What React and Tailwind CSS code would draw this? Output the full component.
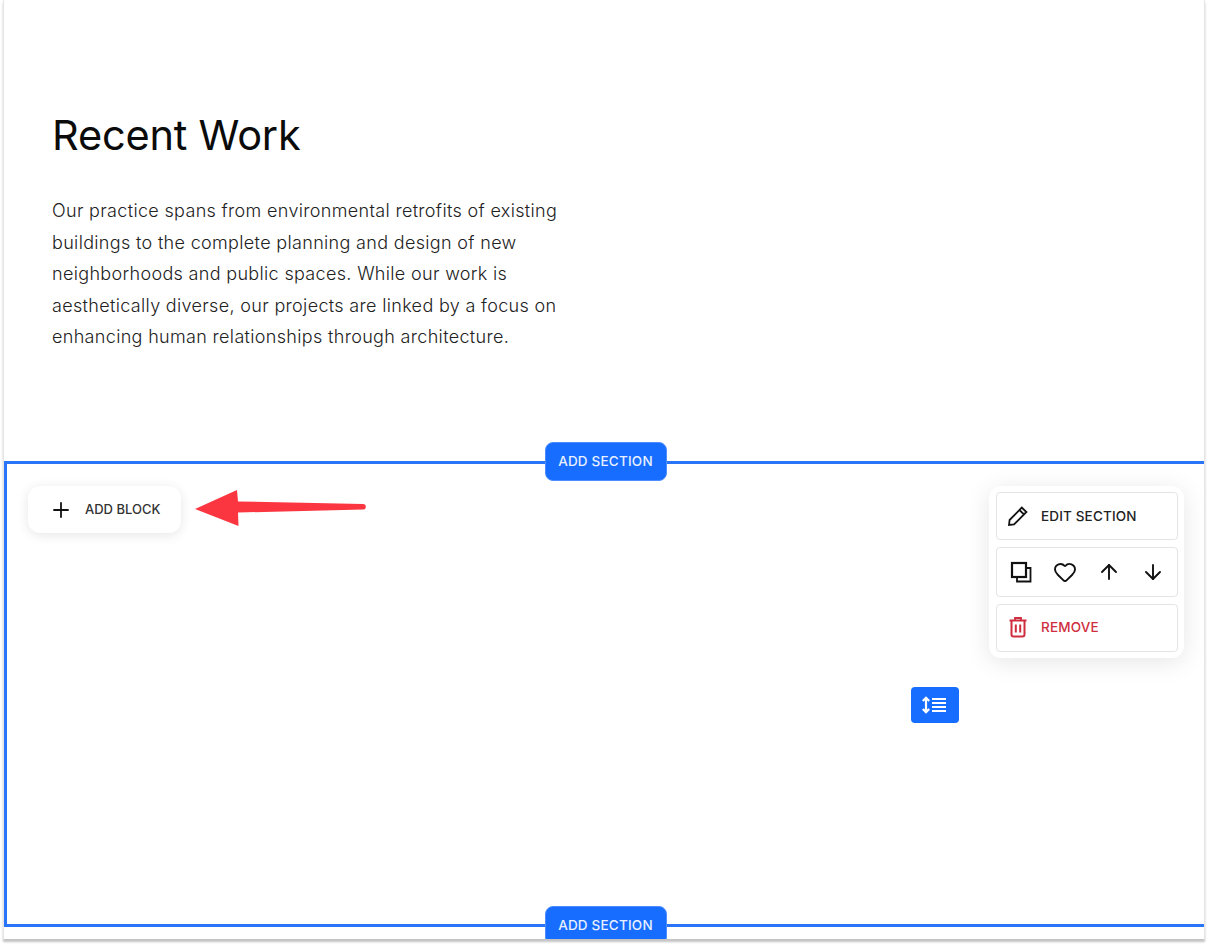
import { ArrowDown, ArrowUp, Heart, Plus } from "lucide-react";

const uiFont = "font-['Inter',sans-serif]";

function AddSectionButton({ className }) {
  return (
    <button
      className={`absolute left-1/2 flex h-[39px] w-[122px] -translate-x-1/2 items-center justify-center rounded-lg border border-[#4d8dff] bg-[#166dff] text-[13.500px] font-medium tracking-[0.2px] text-[#e8f0ff] ${uiFont} ${className}`}
    >
      ADD SECTION
    </button>
  );
}

function PencilIcon() {
  return (
    <svg width="22" height="22" viewBox="0 0 22 22" fill="none" stroke="#111" strokeWidth="1.8" strokeLinejoin="miter">
      <path d="M2 20l.6-5L14.8 2.600l4.600 4.400L7 19.400z" />
      <path d="M12.400 5l4.600 4.400" />
    </svg>
  );
}

function CopyIcon() {
  return (
    <svg width="22" height="22" viewBox="0 0 22 22" fill="none" stroke="#111">
      <rect x="2" y="2" width="14" height="14" strokeWidth="2.200" />
      <path d="M16.500 7H20.500V20.500H7V16.500" strokeWidth="1.800" />
    </svg>
  );
}

function TrashIcon() {
  return (
    <svg width="20" height="22" viewBox="0 0 20 22" fill="none" stroke="#cf2e3e" strokeWidth="2">
      <path d="M1.500 4.500h17" />
      <path d="M7 4V2h6v2" strokeWidth="1.800" />
      <path d="M3.500 4.500V18.500a2 2 0 0 0 2 2h9a2 2 0 0 0 2-2V4.500" />
      <path d="M7.800 8.500v8M12.200 8.500v8" />
    </svg>
  );
}

function ResizeIcon() {
  return (
    <svg width="26" height="18" viewBox="0 0 26 18" fill="none" stroke="#fff" strokeWidth="2.200">
      <path d="M4 2v14M.8 5L4 1.800 7.200 5M.8 13L4 16.200 7.200 13" />
      <path d="M10 3h14M10 7h14M10 11h14M10 15h14" />
    </svg>
  );
}

function ArrowAnnotation() {
  return (
    <svg className="absolute left-[187px] top-[24px]" width="180" height="40" viewBox="0 0 180 40" fill="none">
      <path d="M1 21L43 2 44 13.500 169 16a2.800 2.800 0 0 1 0 5.600L44 24.500 44.500 38z" fill="#fb3640" />
    </svg>
  );
}

export default function App() {
  return (
    <div className="h-[947px] w-[1208px] overflow-hidden bg-white pl-[3px]">
      <div className="flex h-[939px] w-[1202px] flex-col overflow-hidden border-x border-[#e6e6e6] bg-white shadow-[0_3px_2px_#c4c4c4]">
        {/* Intro copy */}
        <section className="h-[461px] shrink-0 px-[48px] pt-[109px]">
          <h1 className={`text-[41.500px] leading-[52px] font-normal tracking-[-0.2px] text-[#0b0b0b] ${uiFont}`}>
            Recent Work
          </h1>
          <p className={`mt-[34px] w-[540px] text-[18px] leading-[31.500px] font-light tracking-[0.33px] text-[#222] ${uiFont}`}>
            Our practice spans from environmental retrofits of existing
            <br />
            buildings to the complete planning and design of new
            <br />
            neighborhoods and public spaces. While our work is
            <br />
            aesthetically diverse, our projects are linked by a focus on
            <br />
            enhancing human relationships through architecture.
          </p>
        </section>

        {/* Selected section */}
        <section className="relative flex h-[466px] shrink-0 items-start justify-between border-y-[3px] border-l-[3px] border-[#2a74f8] pt-[22px] pl-[21px] pr-[20px]">
          <AddSectionButton className="top-[-22px]" />
          <AddSectionButton className="top-[442px]" />

          <button className={`flex h-[47px] w-[153px] items-center gap-[12px] rounded-xl bg-white pl-[21px] text-[13px] font-medium text-[#333] shadow-[0_2px_12px_rgba(0,0,0,0.1)] ${uiFont}`}>
            <Plus size={24} strokeWidth={1.8} className="text-[#111]" />
            ADD BLOCK
          </button>
          <ArrowAnnotation />

          <div className={`flex w-[195px] flex-col gap-[7px] rounded-xl bg-white py-[6px] pr-[6px] pl-[7px] text-[13.500px] font-medium tracking-[0.15px] shadow-[0_4px_24px_rgba(0,0,0,0.1)] ${uiFont}`}>
            <button className="flex h-[48px] items-center gap-[12px] rounded border border-[#e4e4e4] pl-[10px] text-[#222]">
              <PencilIcon />
              EDIT SECTION
            </button>
            <div className="flex h-[50px] items-center justify-between rounded border border-[#e4e4e4] pr-[12px] pl-[13px] text-[#111]">
              <CopyIcon />
              <Heart size={24} strokeWidth={1.9} className="ml-[1px]" />
              <ArrowUp size={24} strokeWidth={1.9} />
              <ArrowDown size={24} strokeWidth={1.9} />
            </div>
            <button className="flex h-[48px] items-center gap-[13px] rounded border border-[#e4e4e4] pb-[2px] pl-[11px] text-[#cf2e3e]">
              <TrashIcon />
              REMOVE
            </button>
          </div>

          <button className="absolute left-[904px] top-[223px] flex h-[36px] w-[48px] items-center justify-center rounded bg-[#166dff]">
            <ResizeIcon />
          </button>
        </section>
      </div>
    </div>
  );
}
